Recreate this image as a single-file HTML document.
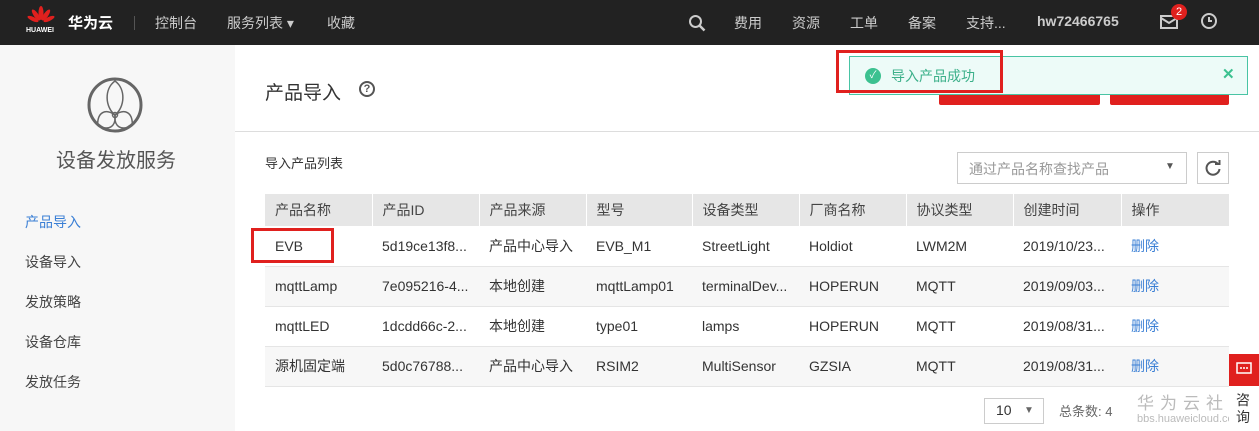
<!DOCTYPE html>
<html><head><meta charset="utf-8"><style>
*{margin:0;padding:0;box-sizing:border-box}
body{width:1259px;height:431px;overflow:hidden;background:#fff;font-family:"Liberation Sans","Noto Sans CJK SC",sans-serif;position:relative;color:#333;font-size:14px}
.a{position:absolute;white-space:nowrap}
.top{position:absolute;left:0;top:0;width:1259px;height:45px;background:#222}
.nav{color:#ccc;font-size:14px;top:13px}
.side{position:absolute;left:0;top:45px;width:235px;height:386px;background:#f7f7f7}
.sm{left:25px;font-size:14px;color:#444}
table{position:absolute;left:265px;top:194px;border-collapse:collapse;font-size:14px}
td{height:40px;padding-left:10px;color:#333;border-bottom:1px solid #e5e5e5}
tr.h td{height:32px;background:#e6e6e6;color:#444;border:none;border-left:1px solid #fff}
tr.h td:first-child{border-left:none}
tr:nth-child(odd):not(.h) td{background:#f7f7f7}
.l{color:#3a7fd5}
</style></head><body>
<div class="top"></div>
<svg class="a" style="left:26px;top:6px" width="30" height="20" viewBox="0 0 30 20"><g fill="#e0201e"><ellipse cx="15" cy="7" rx="2.5" ry="7"/><ellipse cx="10" cy="9" rx="2.3" ry="6.5" transform="rotate(-35 10 9)"/><ellipse cx="20" cy="9" rx="2.3" ry="6.5" transform="rotate(35 20 9)"/><ellipse cx="7" cy="13" rx="2" ry="6" transform="rotate(-65 7 13)"/><ellipse cx="23" cy="13" rx="2" ry="6" transform="rotate(65 23 13)"/></g></svg>
<div class="a" style="left:26px;top:27px;color:#fff;font-size:7px;font-weight:bold">HUAWEI</div>
<div class="a" style="left:68px;top:12px;color:#fff;font-size:15px;font-weight:bold">华为云</div>
<div class="a" style="left:134px;top:16px;width:1px;height:14px;background:#555"></div>
<div class="a nav" style="left:155px">控制台</div>
<div class="a nav" style="left:227px">服务列表 ▾</div>
<div class="a nav" style="left:327px">收藏</div>
<svg class="a" style="left:688px;top:14px" width="18" height="18" viewBox="0 0 18 18"><circle cx="7.5" cy="7.5" r="5.5" stroke="#ccc" stroke-width="2" fill="none"/><path d="M11.5 11.5l5 5" stroke="#ccc" stroke-width="2.5"/></svg>
<div class="a nav" style="left:734px">费用</div>
<div class="a nav" style="left:792px">资源</div>
<div class="a nav" style="left:850px">工单</div>
<div class="a nav" style="left:908px">备案</div>
<div class="a nav" style="left:966px">支持...</div>
<div class="a nav" style="left:1037px;font-weight:bold">hw72466765</div>
<svg class="a" style="left:1160px;top:14px" width="18" height="16"><rect x="1" y="2" width="16" height="12" fill="none" stroke="#ccc" stroke-width="2"/><path d="M1 4l8 5 8-5" fill="none" stroke="#ccc" stroke-width="2"/></svg>
<div class="a" style="left:1171px;top:4px;width:16px;height:16px;border-radius:8px;background:#e0201e;color:#fff;font-size:11px;text-align:center;line-height:16px">2</div>
<svg class="a" style="left:1200px;top:12px" width="18" height="18"><circle cx="9" cy="9" r="7" fill="none" stroke="#ccc" stroke-width="2"/><path d="M9 5v4h3" fill="none" stroke="#ccc" stroke-width="2"/></svg>

<div class="side"></div>
<svg class="a" style="left:87px;top:77px" width="56" height="56" viewBox="0 0 56 56" fill="none" stroke="#666"><circle cx="28" cy="28" r="26" stroke-width="3"/><g stroke-width="1.5"><path d="M28 38C18 30 17 12 28 4C39 12 38 30 28 38Z"/><path d="M28 38C17 33 17 24 28 18C39 24 39 33 28 38Z" transform="rotate(120 28 38)"/><path d="M28 38C17 33 17 24 28 18C39 24 39 33 28 38Z" transform="rotate(240 28 38)"/><circle cx="28" cy="38" r="2.5"/></g></svg>
<div class="a" style="left:56px;top:144px;font-size:20px;color:#555">设备发放服务</div>
<div class="a sm" style="top:212px;color:#3a7fd5">产品导入</div>
<div class="a sm" style="top:252px">设备导入</div>
<div class="a sm" style="top:292px">发放策略</div>
<div class="a sm" style="top:332px">设备仓库</div>
<div class="a sm" style="top:372px">发放任务</div>

<div class="a" style="left:265px;top:78px;font-size:19px;color:#333">产品导入</div>
<div class="a" style="left:359px;top:81px;width:16px;height:16px;border:2px solid #555;border-radius:8px;font-size:11px;font-weight:bold;text-align:center;line-height:12px;color:#555">?</div>
<div class="a" style="left:939px;top:80px;width:161px;height:25px;background:#e0201e;border-radius:2px"></div>
<div class="a" style="left:1110px;top:80px;width:119px;height:25px;background:#e0201e;border-radius:2px"></div>
<div class="a" style="left:235px;top:131px;width:1024px;height:1px;background:#ddd"></div>
<div class="a" style="left:849px;top:56px;width:399px;height:39px;background:#edfbf8;border:1px solid #49c4a4"></div>
<div class="a" style="left:865px;top:68px;width:16px;height:16px;border-radius:8px;background:#3cc190;color:#fff;font-size:10px;text-align:center;line-height:16px">✓</div>
<div class="a" style="left:891px;top:66px;font-size:14px;color:#3cb08a">导入产品成功</div>
<div class="a" style="left:1222px;top:65px;font-size:15px;font-weight:bold;color:#3cc190">✕</div>
<div class="a" style="left:836px;top:50px;width:167px;height:43px;border:3px solid #e0201e"></div>

<div class="a" style="left:265px;top:153px;font-size:13px;color:#333">导入产品列表</div>
<div class="a" style="left:957px;top:152px;width:230px;height:32px;border:1px solid #ccc;background:#fff"></div>
<div class="a" style="left:969px;top:159px;font-size:14px;color:#999">通过产品名称查找产品</div>
<div class="a" style="left:1165px;top:161px;font-size:10px;color:#555">▼</div>
<div class="a" style="left:1197px;top:152px;width:32px;height:32px;border:1px solid #ccc"></div>
<svg class="a" style="left:1204px;top:159px" width="18" height="18" viewBox="0 0 18 18"><path d="M14 5A6.5 6.5 0 1 0 15.5 10" fill="none" stroke="#555" stroke-width="2"/><path d="M11 5h4.5V1" fill="none" stroke="#555" stroke-width="2"/></svg>

<table>
<colgroup><col width="107"><col width="107"><col width="107"><col width="106"><col width="107"><col width="107"><col width="107"><col width="108"><col width="108"></colgroup>
<tr class="h"><td>产品名称</td><td>产品ID</td><td>产品来源</td><td>型号</td><td>设备类型</td><td>厂商名称</td><td>协议类型</td><td>创建时间</td><td>操作</td></tr>
<tr><td>EVB</td><td>5d19ce13f8...</td><td>产品中心导入</td><td>EVB_M1</td><td>StreetLight</td><td>Holdiot</td><td>LWM2M</td><td>2019/10/23...</td><td class="l">删除</td></tr>
<tr><td>mqttLamp</td><td>7e095216-4...</td><td>本地创建</td><td>mqttLamp01</td><td>terminalDev...</td><td>HOPERUN</td><td>MQTT</td><td>2019/09/03...</td><td class="l">删除</td></tr>
<tr><td>mqttLED</td><td>1dcdd66c-2...</td><td>本地创建</td><td>type01</td><td>lamps</td><td>HOPERUN</td><td>MQTT</td><td>2019/08/31...</td><td class="l">删除</td></tr>
<tr><td>源机固定端</td><td>5d0c76788...</td><td>产品中心导入</td><td>RSIM2</td><td>MultiSensor</td><td>GZSIA</td><td>MQTT</td><td>2019/08/31...</td><td class="l">删除</td></tr>
</table>
<div class="a" style="left:251px;top:228px;width:83px;height:35px;border:3px solid #e0201e"></div>

<div class="a" style="left:984px;top:398px;width:60px;height:26px;border:1px solid #ccc"></div>
<div class="a" style="left:996px;top:402px;font-size:14px">10</div>
<div class="a" style="left:1024px;top:405px;font-size:10px;color:#666">▼</div>
<div class="a" style="left:1059px;top:401px;font-size:13px;color:#666">总条数: 4</div>
<div class="a" style="left:1137px;top:389px;font-size:17px;color:#bbb;letter-spacing:6px">华为云社区</div>
<div class="a" style="left:1137px;top:413px;font-size:11px;color:#bbb">bbs.huaweicloud.com</div>
<div class="a" style="left:1229px;top:354px;width:30px;height:32px;background:#e0201e"></div>
<svg class="a" style="left:1236px;top:362px" width="16" height="14"><rect x="1" y="1" width="14" height="10" fill="none" stroke="#fff" stroke-width="1.5"/><circle cx="5" cy="6" r="1" fill="#fff"/><circle cx="8" cy="6" r="1" fill="#fff"/><circle cx="11" cy="6" r="1" fill="#fff"/></svg>
<div class="a" style="left:1229px;top:386px;width:30px;height:45px;background:#fff"></div>
<div class="a" style="left:1236px;top:392px;font-size:14px;line-height:17px;color:#333;white-space:normal;width:16px">咨询</div>
</body></html>
